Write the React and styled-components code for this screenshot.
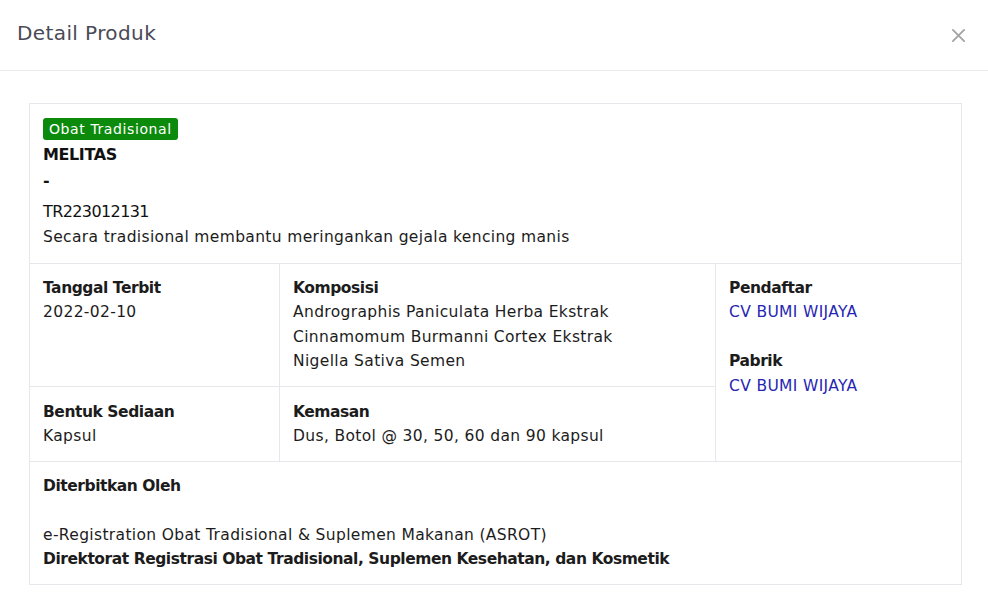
import React from "react";
import styled, { createGlobalStyle } from "styled-components";

const Global = createGlobalStyle`
  html, body { margin: 0; padding: 0; background: #ffffff; }
  body { font-family: "DejaVu Sans", "Noto Sans", sans-serif; color: #111; }
  * { box-sizing: border-box; }
`;

const Modal = styled.div`
  width: 988px;
  height: 611px;
  background: #fff;
  display: flex;
  flex-direction: column;
`;

const Header = styled.header`
  height: 71px;
  border-bottom: 1px solid #e9ebee;
  display: flex;
  align-items: center;
  justify-content: space-between;
  padding: 0 21px 0 17px;
`;

const Title = styled.h2`
  margin: 0;
  font-size: 20px;
  font-weight: 500;
  color: #4a4a55;
  letter-spacing: 0.4px;
  padding-bottom: 5px;
`;

const CloseBtn = styled.button`
  border: 0;
  background: none;
  padding: 0;
  width: 18px;
  height: 18px;
  color: #a3a3a3;
  display: flex;
  align-items: center;
  justify-content: center;
  cursor: pointer;
`;

const Body = styled.div`
  padding: 32px 26px 0 29px;
`;

const Card = styled.div`
  width: 933px;
  border: 1px solid #e5e7eb;
`;

const Top = styled.div`
  padding: 14px 13px 13px;
  border-bottom: 1px solid #e5e7eb;
  display: flex;
  flex-direction: column;
  align-items: flex-start;
`;

const Badge = styled.span`
  background: #0b8a0b;
  color: #fff;
  font-size: 14px;
  line-height: 22px;
  padding: 0 6px 0 6px;
  border-radius: 3px;
  letter-spacing: 0.6px;
`;

const BigLine = styled.div`
  font-size: 16px;
  font-weight: ${(p) => (p.$bold ? 700 : 400)};
  line-height: 26px;
  margin-top: ${(p) => p.$mt || 0}px;
  color: #111;
  letter-spacing: ${(p) => p.$ls ?? -0.3}px;
`;

const Text = styled.div`
  font-size: 15.5px;
  line-height: 24.5px;
  color: ${(p) => p.$color || "#1c1c1c"};
  font-weight: ${(p) => (p.$bold ? 700 : 400)};
  letter-spacing: ${(p) => (p.$bold ? -0.45 : 0.35)}px;
`;

const Grid = styled.div`
  display: grid;
  grid-template-columns: 250px 436px 1fr;
  grid-template-rows: 123px 74px;
  border-bottom: 1px solid #e5e7eb;
`;

const Cell = styled.div`
  padding: ${(p) => (p.$row === "2" ? "13px 13px 11px" : "12px 13px")};
  border-right: ${(p) => (p.$last ? "0" : "1px solid #e5e7eb")};
  border-bottom: ${(p) => (p.$bottom ? "1px solid #e5e7eb" : "0")};
  grid-column: ${(p) => p.$col};
  grid-row: ${(p) => p.$row};
`;

const Spacer = styled.div`
  height: ${(p) => p.$h}px;
`;

const Bottom = styled.div`
  padding: 12px 13px 12px;
`;

function CloseIcon() {
  return (
    <svg width="15" height="15" viewBox="0 0 16 16" fill="none" stroke="currentColor" strokeWidth="1.9" strokeLinecap="round">
      <path d="M2 2 L14 14 M14 2 L2 14" />
    </svg>
  );
}

export default function App() {
  return (
    <>
      <Global />
      <Modal>
        <Header>
          <Title>Detail Produk</Title>
          <CloseBtn aria-label="Tutup"><CloseIcon /></CloseBtn>
        </Header>
        <Body>
          <Card>
            <Top>
              <Badge>Obat Tradisional</Badge>
              <BigLine $bold $mt={2} $ls={-0.4}>MELITAS</BigLine>
              <BigLine $bold>-</BigLine>
              <BigLine $mt={5} $ls={-0.6}>TR223012131</BigLine>
              <Text>Secara tradisional membantu meringankan gejala kencing manis</Text>
            </Top>
            <Grid>
              <Cell $col="1" $row="1" $bottom>
                <Text $bold>Tanggal Terbit</Text>
                <Text>2022-02-10</Text>
              </Cell>
              <Cell $col="2" $row="1" $bottom>
                <Text $bold>Komposisi</Text>
                <Text>Andrographis Paniculata Herba Ekstrak</Text>
                <Text>Cinnamomum Burmanni Cortex Ekstrak</Text>
                <Text>Nigella Sativa Semen</Text>
              </Cell>
              <Cell $col="3" $row="1 / span 2" $last>
                <Text $bold>Pendaftar</Text>
                <Text $color="#2626b3">CV BUMI WIJAYA</Text>
                <Spacer $h={24.5} />
                <Text $bold>Pabrik</Text>
                <Text $color="#2626b3">CV BUMI WIJAYA</Text>
              </Cell>
              <Cell $col="1" $row="2">
                <Text $bold>Bentuk Sediaan</Text>
                <Text>Kapsul</Text>
              </Cell>
              <Cell $col="2" $row="2">
                <Text $bold>Kemasan</Text>
                <Text>Dus, Botol @ 30, 50, 60 dan 90 kapsul</Text>
              </Cell>
            </Grid>
            <Bottom>
              <Text $bold>Diterbitkan Oleh</Text>
              <Spacer $h={24.5} />
              <Text>e-Registration Obat Tradisional &amp; Suplemen Makanan (ASROT)</Text>
              <Text $bold>Direktorat Registrasi Obat Tradisional, Suplemen Kesehatan, dan Kosmetik</Text>
            </Bottom>
          </Card>
        </Body>
      </Modal>
    </>
  );
}
